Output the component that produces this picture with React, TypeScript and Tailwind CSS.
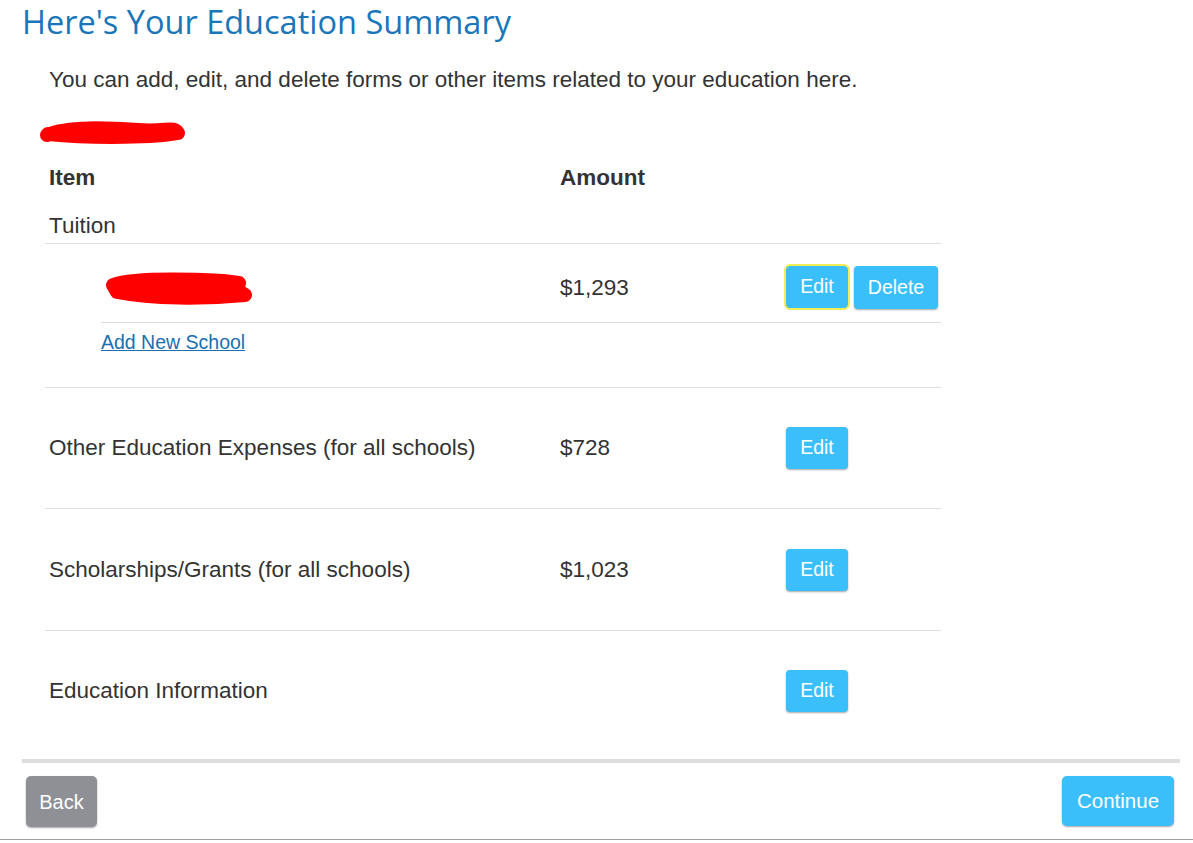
const btn =
  "rounded-[4px] bg-[#3bbffb] text-white text-[19.5px] shadow-[0_1px_2px_rgba(0,0,0,0.35)] flex items-center justify-center";

function Scribble({ w, h, d }: { w: number; h: number; d: string }) {
  return (
    <svg width={w} height={h} viewBox={`0 0 ${w} ${h}`}>
      <path d={d} fill="#ff0000" stroke="#ff0000" strokeWidth={14} strokeLinecap="round" strokeLinejoin="round" />
    </svg>
  );
}

function EditButton({ glow }: { glow?: boolean }) {
  return (
    <button
      className={
        btn +
        " w-[62px] h-[42px] " +
        (glow ? "outline outline-2 outline-[#f3ee55] shadow-[0_0_5px_2px_rgba(245,240,80,0.8)]" : "")
      }
    >
      Edit
    </button>
  );
}

export default function App() {
  return (
    <div className="relative w-[1193px] h-[843px] overflow-hidden bg-white font-['Liberation_Sans',Arial,sans-serif] text-[#333]">
      <h1 className="pl-[22px] h-[48px] leading-[44px] text-[32.5px] text-[#1976b9] font-['Open_Sans','Lato',sans-serif]">
        Here's Your Education Summary
      </h1>

      <p className="mt-[19px] pl-[49px] text-[22.5px] leading-[26px]">
        You can add, edit, and delete forms or other items related to your education here.
      </p>

      <div className="pl-[38px] pt-[25px] h-[67px]">
        <Scribble w={150} h={28} d="M9 17 C 30 8, 70 10, 100 12 S 135 8, 140 15 C 120 19, 60 21, 10 16 Z" />
      </div>

      <div className="ml-[45px] w-[896px]">
        <div className="flex h-[36px] items-center text-[22.5px] font-bold">
          <div className="w-[515px] pl-[4px]">Item</div>
          <div>Amount</div>
        </div>

        <div className="h-[48px] border-b border-[#dddddd] pl-[4px] pt-[17px] text-[22.5px] leading-[26px]">Tuition</div>

        <div className="border-b border-[#dddddd]">
          <div className="ml-[56px]">
            <div className="flex h-[79px] items-center border-b border-[#dddddd] pt-[9px] text-[22.5px]">
              <div className="w-[459px] pl-[2px]">
                <Scribble w={152} h={36} d="M10 15 C 30 8, 80 9, 120 11 L 136 13 L 134 20 L 142 25 C 100 29, 50 29, 14 22 Z" />
              </div>
              <div className="w-[226px]">$1,293</div>
              <div className="flex gap-[6px]">
                <EditButton glow />
                <button className={btn + " w-[84px] h-[43px]"}>Delete</button>
              </div>
            </div>
            <div className="h-[64px] pt-[7px]">
              <a href="#" className="text-[19.5px] leading-[24px] text-[#1a70b0] underline">
                Add New School
              </a>
            </div>
          </div>
        </div>

        {[
          ["Other Education Expenses (for all schools)", "$728", "h-[121px]"],
          ["Scholarships/Grants (for all schools)", "$1,023", "h-[122px]"],
        ].map(([label, amount, h]) => (
          <div key={label} className={"flex items-center border-b border-[#dddddd] text-[22.5px] " + h}>
            <div className="w-[515px] pl-[4px]">{label}</div>
            <div className="w-[226px]">{amount}</div>
            <EditButton />
          </div>
        ))}

        <div className="flex h-[120px] items-center text-[22.5px]">
          <div className="w-[741px] pl-[4px]">Education Information</div>
          <EditButton />
        </div>
      </div>

      <div className="mt-[8px] ml-[22px] mr-[13px] h-[4px] bg-[#dddddd]" />

      <div className="flex h-[77px] items-start justify-between pl-[26px] pr-[19px] pt-[13px] border-b border-[#a0a0a0]">
        <button className="flex h-[51px] w-[71px] items-center justify-center rounded-[5px] bg-[#8e9095] text-[20px] text-white shadow-[0_1px_2px_rgba(0,0,0,0.35)]">
          Back
        </button>
        <button className="flex h-[50px] w-[112px] items-center justify-center rounded-[5px] bg-[#3bbffb] text-[20.5px] text-white shadow-[0_1px_2px_rgba(0,0,0,0.35)]">
          Continue
        </button>
      </div>
    </div>
  );
}
